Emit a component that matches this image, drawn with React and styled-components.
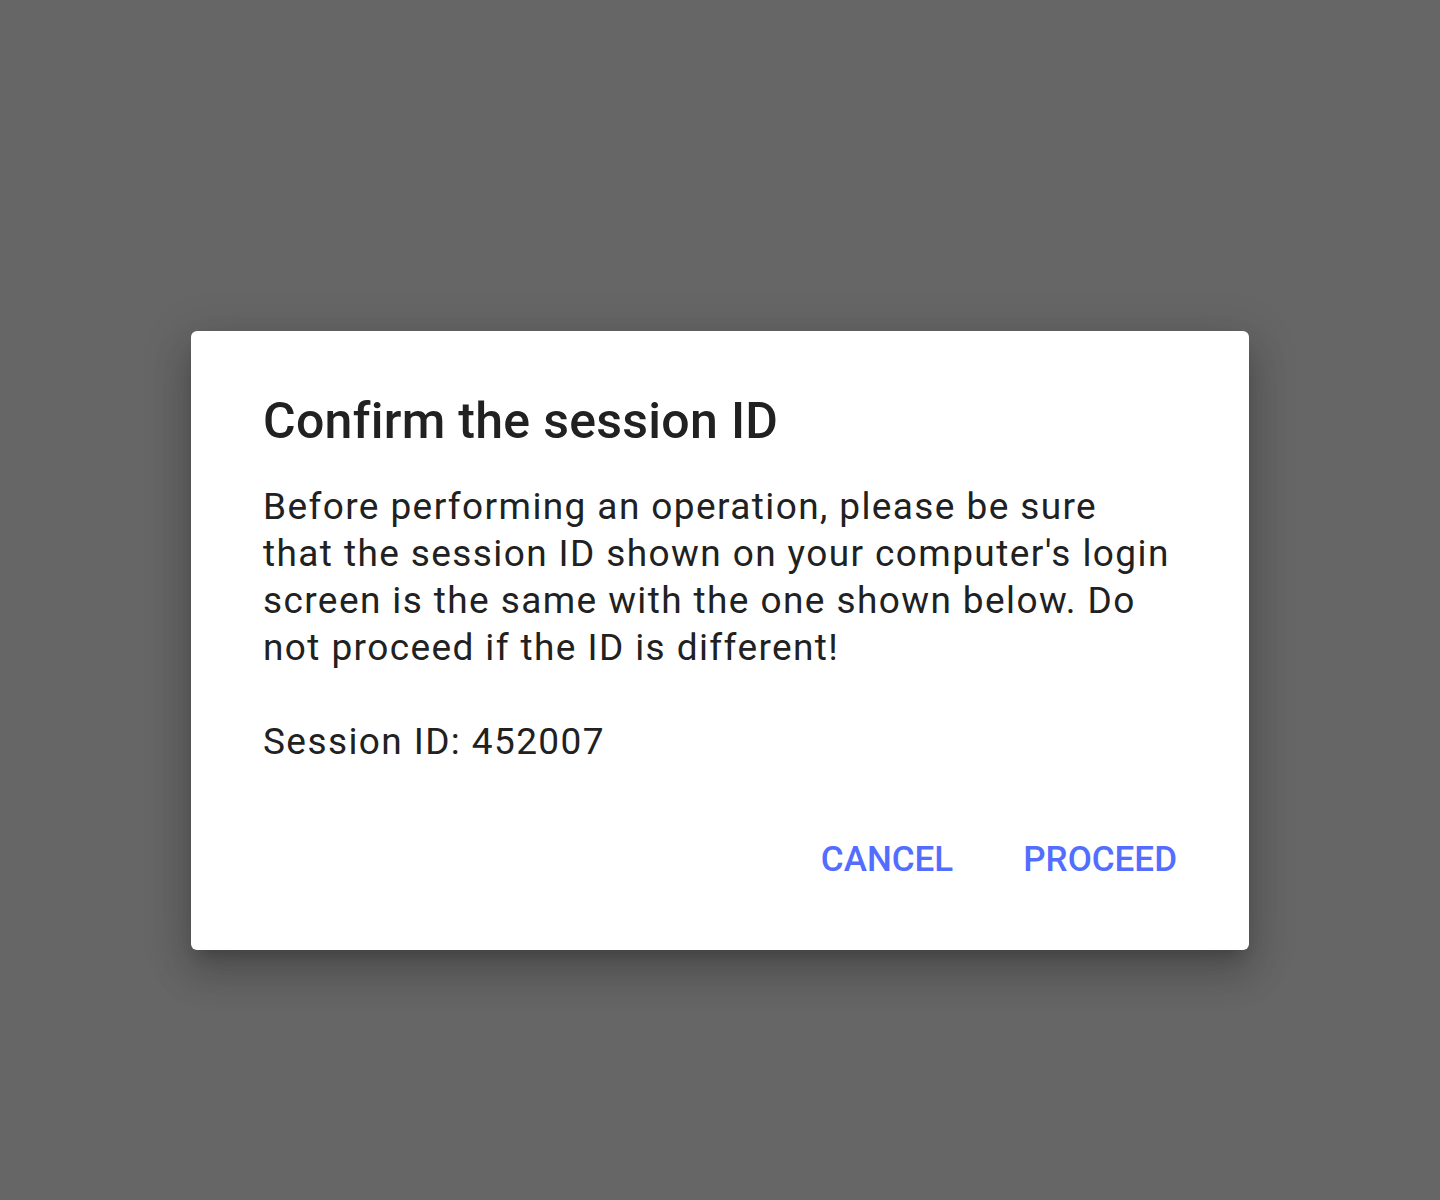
import React from 'react';
import styled, { createGlobalStyle } from 'styled-components';

const GlobalStyle = createGlobalStyle`
  html, body {
    margin: 0;
    padding: 0;
    background: #666666;
  }
  body {
    font-family: Roboto, "Noto Sans", sans-serif;
  }
`;

const Scrim = styled.main`
  width: 1440px;
  height: 1200px;
  background: #666666;
  display: flex;
  justify-content: center;
  align-items: flex-start;
  padding-top: 331px;
  box-sizing: border-box;
`;

const Dialog = styled.section`
  width: 1058px;
  height: 619px;
  box-sizing: border-box;
  background: #ffffff;
  border-radius: 6px;
  box-shadow: 0 24px 38px 3px rgba(0, 0, 0, 0.14), 0 9px 46px 8px rgba(0, 0, 0, 0.12),
    0 11px 15px -7px rgba(0, 0, 0, 0.2);
  padding: 60px 72px 0 72px;
  display: flex;
  flex-direction: column;
`;

const Title = styled.h2`
  margin: 0;
  font-size: 50px;
  font-weight: 500;
  line-height: 60px;
  letter-spacing: 0.3px;
  color: #212121;
`;

const Body = styled.p`
  margin: 32px 0 0 0;
  font-size: 37px;
  line-height: 47px;
  letter-spacing: 1.4px;
  color: #212121;
  white-space: pre-line;
`;

const Actions = styled.div`
  display: flex;
  justify-content: flex-end;
  gap: 70px;
  margin-top: 75px;
`;

const ActionButton = styled.button`
  border: none;
  background: none;
  padding: 0;
  font-family: Roboto, "Noto Sans", sans-serif;
  font-size: 35px;
  font-weight: 500;
  line-height: 40px;
  color: #536dfe;
  text-transform: uppercase;
  cursor: pointer;
`;

export default function App() {
  return (
    <>
      <GlobalStyle />
      <Scrim>
        <Dialog>
          <Title>Confirm the session ID</Title>
          <Body>
            {"Before performing an operation, please be sure\nthat the session ID shown on your computer's login\nscreen is the same with the one shown below. Do\nnot proceed if the ID is different!\n\nSession ID: 452007"}
          </Body>
          <Actions>
            <ActionButton>Cancel</ActionButton>
            <ActionButton>Proceed</ActionButton>
          </Actions>
        </Dialog>
      </Scrim>
    </>
  );
}
